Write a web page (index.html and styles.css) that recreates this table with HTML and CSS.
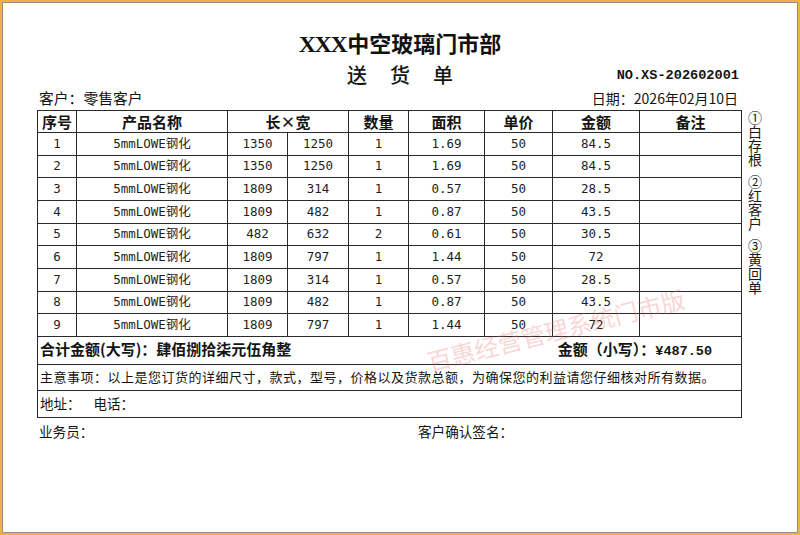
FILE: index.html
```html
<!DOCTYPE html>
<html lang="zh-CN">
<head>
<meta charset="utf-8">
<title>送货单</title>
<link rel="stylesheet" href="styles.css">
</head>
<body>
<div class="page">
  <div class="frame">
    <div class="sheet">
      <h1 class="title"><span class="latin">XXX</span>中空玻璃门市部</h1>
      <div class="subrow">
        <span class="spacer"></span>
        <div class="doc-name"><span>送</span><span>货</span><span>单</span></div>
        <div class="doc-no">NO.XS-202602001</div>
      </div>
      <div class="meta">
        <span class="customer">客户：零售客户</span>
        <span class="date">日期：2026年02月10日</span>
      </div>
      <div class="body">
        <table class="grid">
          <colgroup>
            <col class="c1"><col class="c2"><col class="c3"><col class="c4"><col class="c5"><col class="c6"><col class="c7"><col class="c8"><col class="c9">
          </colgroup>
          <thead>
            <tr class="head">
              <th>序号</th><th>产品名称</th><th colspan="2">长×宽</th><th>数量</th><th>面积</th><th>单价</th><th>金额</th><th>备注</th>
            </tr>
          </thead>
          <tbody>
            <tr><td>1</td><td>5mmLOWE钢化</td><td>1350</td><td>1250</td><td>1</td><td>1.69</td><td>50</td><td>84.5</td><td></td></tr>
            <tr><td>2</td><td>5mmLOWE钢化</td><td>1350</td><td>1250</td><td>1</td><td>1.69</td><td>50</td><td>84.5</td><td></td></tr>
            <tr><td>3</td><td>5mmLOWE钢化</td><td>1809</td><td>314</td><td>1</td><td>0.57</td><td>50</td><td>28.5</td><td></td></tr>
            <tr><td>4</td><td>5mmLOWE钢化</td><td>1809</td><td>482</td><td>1</td><td>0.87</td><td>50</td><td>43.5</td><td></td></tr>
            <tr><td>5</td><td>5mmLOWE钢化</td><td>482</td><td>632</td><td>2</td><td>0.61</td><td>50</td><td>30.5</td><td></td></tr>
            <tr><td>6</td><td>5mmLOWE钢化</td><td>1809</td><td>797</td><td>1</td><td>1.44</td><td>50</td><td>72</td><td></td></tr>
            <tr><td>7</td><td>5mmLOWE钢化</td><td>1809</td><td>314</td><td>1</td><td>0.57</td><td>50</td><td>28.5</td><td></td></tr>
            <tr><td>8</td><td>5mmLOWE钢化</td><td>1809</td><td>482</td><td>1</td><td>0.87</td><td>50</td><td>43.5</td><td></td></tr>
            <tr><td>9</td><td>5mmLOWE钢化</td><td>1809</td><td>797</td><td>1</td><td>1.44</td><td>50</td><td>72</td><td></td></tr>
          </tbody>
          <tfoot>
            <tr class="total">
              <td colspan="9">
                <div class="total-line">
                  <span>合计金额(大写)：肆佰捌拾柒元伍角整</span>
                  <span>金额（小写）：<span class="mono">¥487.50</span></span>
                </div>
              </td>
            </tr>
            <tr class="note">
              <td colspan="9">主意事项：以上是您订货的详细尺寸，款式，型号，价格以及货款总额，为确保您的利益请您仔细核对所有数据。</td>
            </tr>
            <tr class="addr">
              <td colspan="9"><span class="addr-label">地址：</span><span>电话：</span></td>
            </tr>
          </tfoot>
        </table>
        <div class="copies">
          <div class="copy">①白存根</div>
          <div class="copy">②红客户</div>
          <div class="copy">③黄回单</div>
        </div>
      </div>
      <div class="sign">
        <span>业务员：</span>
        <span>客户确认签名：</span>
      </div>
    </div>
    <div class="watermark">百惠经营管理系统门市版</div>
  </div>
</div>
</body>
</html>
```

FILE: styles.css
```css
* { box-sizing: border-box; }

html, body {
  margin: 0;
  padding: 0;
  background: #ffffff;
}

body {
  font-family: "Noto Sans CJK SC", "Noto Sans", sans-serif;
  color: #141414;
}

.page {
  width: 800px;
  height: 535px;
  border: 2px solid #efb440;
  background: #ffffff;
}

.frame {
  position: relative;
  height: 100%;
  border: 1px solid #8e8e8e;
  overflow: hidden;
}

.sheet {
  margin-left: 34px;
  width: 726px;
  padding-top: 25px;
}

.title {
  margin: 0;
  text-align: center;
  font-size: 22px;
  line-height: 28px;
  font-weight: 700;
  color: #111;
  letter-spacing: 0;
}

.title .latin {
  font-family: "Liberation Serif", serif;
  font-size: 24px;
  letter-spacing: -1.5px;
  margin-right: 1px;
}

.subrow {
  display: grid;
  grid-template-columns: 1fr auto 1fr;
  align-items: center;
  height: 28px;
}

.doc-name {
  display: flex;
  gap: 23px;
  font-size: 20px;
  line-height: 28px;
  font-weight: 500;
  padding-top: 2px;
}

.doc-no {
  justify-self: end;
  padding-right: 24px;
  font-family: "Liberation Mono", monospace;
  font-weight: 700;
  font-size: 13.6px;
  line-height: 28px;
  padding-top: 4px;
}

.meta {
  width: 704px;
  display: flex;
  justify-content: space-between;
  align-items: center;
  height: 24px;
  padding: 0 3px 0 2px;
  font-size: 14px;
  line-height: 24px;
}

.customer {
  font-size: 14.8px;
}

.body {
  display: flex;
  align-items: flex-start;
}

.grid {
  width: 704px;
  border-collapse: collapse;
  table-layout: fixed;
}

.c1 { width: 39px; }
.c2 { width: 151px; }
.c3 { width: 60px; }
.c4 { width: 61px; }
.c5 { width: 60px; }
.c6 { width: 76px; }
.c7 { width: 68px; }
.c8 { width: 87px; }
.c9 { width: 102px; }

.grid th,
.grid td {
  border: 1px solid #2a2a2a;
  padding: 0;
  text-align: center;
  vertical-align: middle;
}

.grid th {
  font-size: 15px;
  font-weight: 700;
  height: 22px;
  line-height: 20px;
}

.grid tbody td {
  height: 22.67px;
  line-height: 20px;
  font-family: "DejaVu Sans Mono", "Noto Sans CJK SC", monospace;
  font-size: 12.5px;
  color: #1e1e1e;
}

.grid tfoot td {
  text-align: left;
  padding-left: 2px;
}

.total td {
  height: 26px;
  font-size: 15px;
  font-weight: 700;
  line-height: 24px;
}

.total-line {
  display: flex;
  justify-content: space-between;
  padding-right: 29px;
}

.mono {
  font-family: "Liberation Mono", monospace;
  font-size: 13.5px;
}

.note td {
  height: 26px;
  font-size: 13px;
  letter-spacing: 0.5px;
  line-height: 24px;
}

.addr td {
  height: 27px;
  font-size: 13.5px;
  line-height: 23px;
}

.addr-label {
  margin-right: 13px;
}

.copies {
  display: flex;
  flex-direction: column;
  gap: 8px;
  padding-top: 1px;
  padding-left: 5px;
}

.copy {
  writing-mode: vertical-rl;
  text-orientation: upright;
  font-size: 14px;
  line-height: 16px;
  letter-spacing: 0;
  color: #1a1a1a;
}

.sign {
  display: grid;
  grid-template-columns: 379px auto;
  padding-left: 2px;
  font-size: 13.6px;
  line-height: 26px;
}

.watermark {
  position: absolute;
  left: 421px;
  top: 312px;
  width: 262px;
  text-align: center;
  font-size: 24px;
  line-height: 30px;
  letter-spacing: 0;
  color: rgba(235, 110, 110, 0.3);
  transform: rotate(-14deg);
  pointer-events: none;
  white-space: nowrap;
}
```
